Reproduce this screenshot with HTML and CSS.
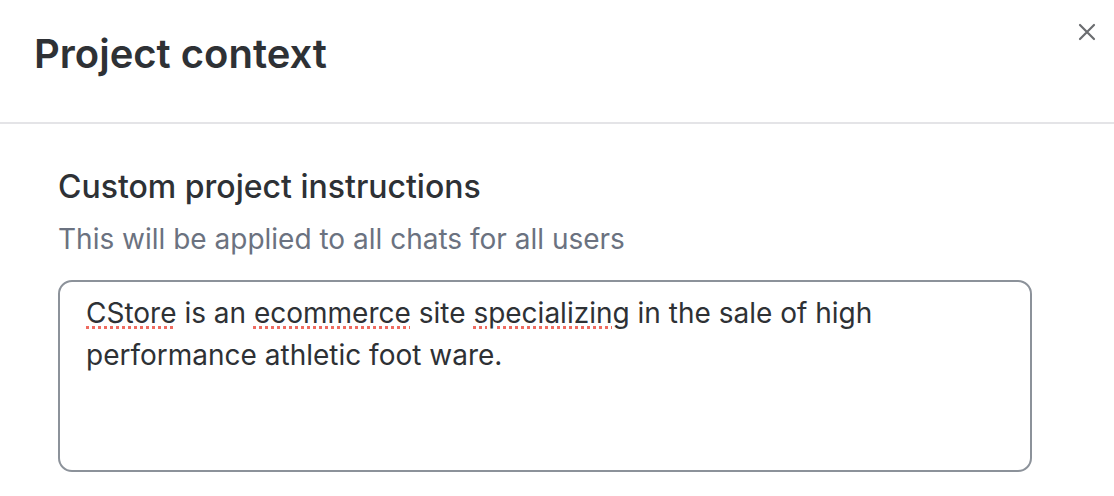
FILE: index.html
```html
<!DOCTYPE html>
<html>
<head>
<meta charset="utf-8">
<link rel="stylesheet" href="styles.css">
</head>
<body>
<div class="dialog">
  <header class="dialog-header">
    <h1 class="dialog-title">Project context</h1>
    <button class="close-btn" aria-label="Close">
      <svg width="18" height="18" viewBox="0 0 18 18"><path d="M2 2 L16 16 M16 2 L2 16" stroke="#6b6d70" stroke-width="2.2" stroke-linecap="round" fill="none"/></svg>
    </button>
  </header>
  <section class="dialog-body">
    <h2 class="field-label">Custom project instructions</h2>
    <p class="field-help">This will be applied to all chats for all users</p>
    <div class="textarea"><span class="misspelled">CStore</span> is an <span class="misspelled">ecommerce</span> site <span class="misspelled">specializing</span> in the sale of high performance athletic foot ware.</div>
  </section>
</div>
</body>
</html>
```
FILE: styles.css
```css
html, body {
  margin: 0;
  padding: 0;
  background: #ffffff;
}
body {
  font-family: Inter, "Noto Sans", sans-serif;
  color: #2e3135;
}
.dialog {
  width: 1114px;
}
.dialog-header {
  display: flex;
  justify-content: space-between;
  align-items: flex-start;
  height: 122px;
  border-bottom: 2px solid #e4e4e7;
  box-sizing: content-box;
}
.dialog-title {
  margin: 28px 0 0 34px;
  font-size: 40px;
  line-height: 52px;
  font-weight: 600;
  color: #2e3135;
}
.close-btn {
  margin: 23px 18px 0 0;
  width: 18px;
  height: 18px;
  padding: 0;
  border: 0;
  background: none;
  display: flex;
}
.dialog-body {
  padding: 0 82px 0 58px;
}
.field-label {
  margin: 43px 0 0 0;
  font-size: 32px;
  line-height: 40px;
  font-weight: 500;
  color: #2e3135;
}
.field-help {
  margin: 15px 0 0 0;
  font-size: 28px;
  line-height: 34px;
  font-weight: 400;
  color: #6b7280;
}
.textarea {
  margin-top: 24px;
  height: 192px;
  box-sizing: border-box;
  border: 2px solid #8c929a;
  border-radius: 14px;
  padding: 10px 26px;
  font-size: 28px;
  line-height: 42px;
  color: #2e3135;
}
.misspelled {
  text-decoration: underline dotted #ef6b60;
  text-decoration-thickness: 3px;
  text-underline-offset: 3px;
}
```
